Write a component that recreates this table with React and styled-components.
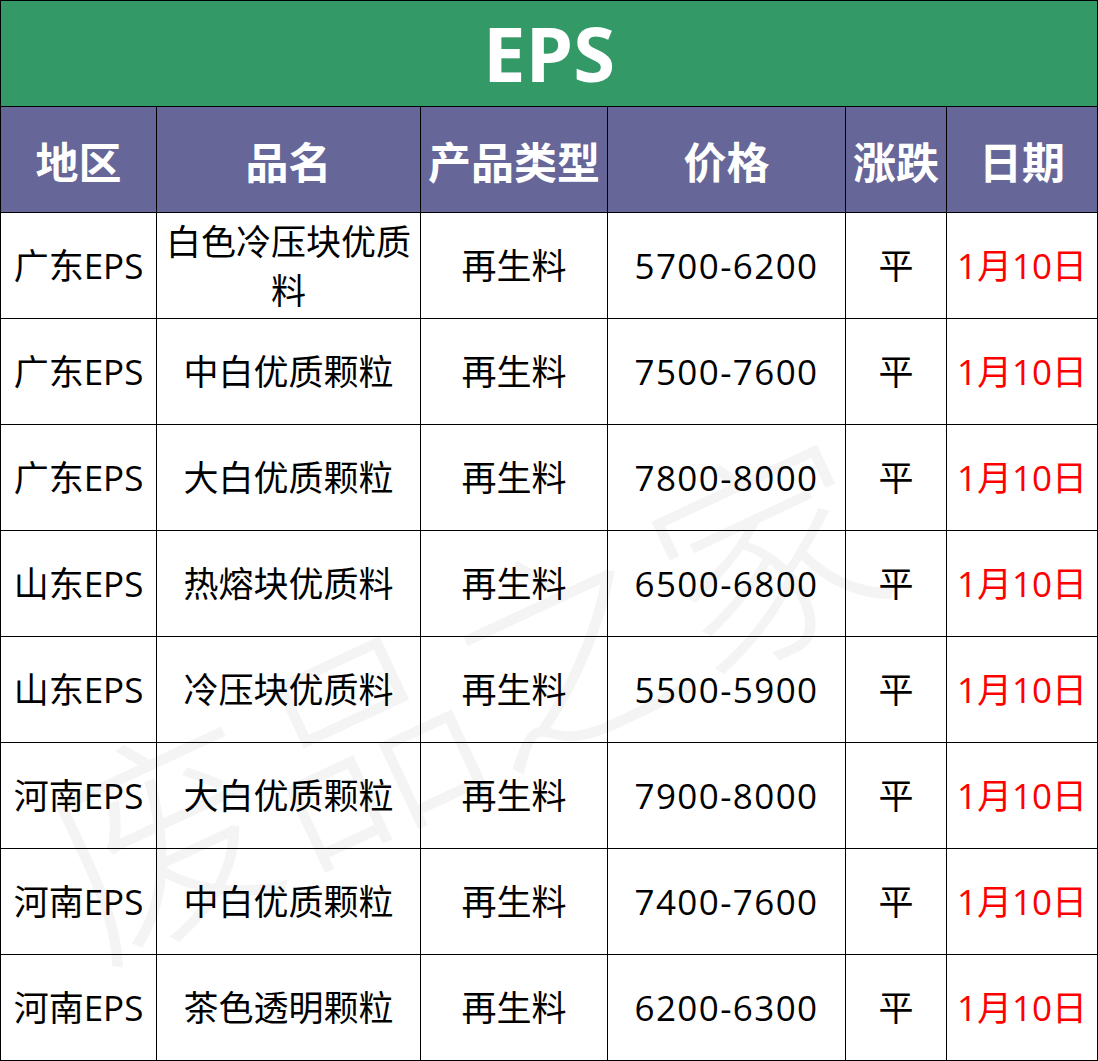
import React from "react";
import styled, { createGlobalStyle } from "styled-components";

const Global = createGlobalStyle`
  html, body { margin: 0; padding: 0; background: #ffffff; }
  body { font-family: "Open Sans", "Noto Sans CJK SC", sans-serif; }
`;

const Wrap = styled.div`
  position: relative;
  width: 1098px;
`;

const Grid = styled.div`
  display: grid;
  grid-template-columns: 155px 263px 186px 237px 100px 150px;
  grid-auto-rows: 105px;
  gap: 1px;
  padding: 1px;
  background: #000000;
  width: 1098px;
  box-sizing: border-box;
`;

const Title = styled.div`
  grid-column: 1 / -1;
  background: #339966;
  color: #ffffff;
  display: flex;
  align-items: center;
  justify-content: center;
  font-family: "Open Sans", "Noto Sans CJK SC", sans-serif;
  font-weight: 700;
  font-size: 76px;
  padding-bottom: 2px;
`;

const Head = styled.div`
  background: #666699;
  color: #ffffff;
  display: flex;
  align-items: center;
  justify-content: center;
  font-family: "Noto Sans CJK SC", sans-serif;
  font-weight: 700;
  font-size: 43px;
  white-space: nowrap;
`;

const Cell = styled.div`
  background: #ffffff;
  color: ${(p) => (p.$red ? "#ff0000" : "#000000")};
  display: flex;
  align-items: center;
  justify-content: center;
  text-align: center;
  font-family: "Open Sans", "Noto Sans CJK SC", sans-serif;
  font-size: 35px;
  line-height: 49px;
  letter-spacing: ${(p) => (p.$price ? "1.4px" : "0")};
  padding: 0 4px;
`;

const Watermark = styled.div`
  position: absolute;
  left: 10px;
  top: 560px;
  width: 900px;
  height: 250px;
  display: flex;
  align-items: center;
  justify-content: center;
  font-family: "Noto Sans CJK SC", sans-serif;
  font-weight: 300;
  font-size: 222px;
  line-height: 250px;
  color: rgba(0, 0, 0, 0.045);
  transform: rotate(-25deg);
  pointer-events: none;
  white-space: nowrap;
`;

const heads = ["地区", "品名", "产品类型", "价格", "涨跌", "日期"];

const rows = [
  ["广东EPS", "白色冷压块优质料", "再生料", "5700-6200"],
  ["广东EPS", "中白优质颗粒", "再生料", "7500-7600"],
  ["广东EPS", "大白优质颗粒", "再生料", "7800-8000"],
  ["山东EPS", "热熔块优质料", "再生料", "6500-6800"],
  ["山东EPS", "冷压块优质料", "再生料", "5500-5900"],
  ["河南EPS", "大白优质颗粒", "再生料", "7900-8000"],
  ["河南EPS", "中白优质颗粒", "再生料", "7400-7600"],
  ["河南EPS", "茶色透明颗粒", "再生料", "6200-6300"],
];

export default function App() {
  return (
    <>
      <Global />
      <Wrap>
        <Grid>
          <Title>EPS</Title>
          {heads.map((h) => (
            <Head key={h}>{h}</Head>
          ))}
          {rows.map((r, i) => (
            <React.Fragment key={i}>
              <Cell>{r[0]}</Cell>
              <Cell>{r[1]}</Cell>
              <Cell>{r[2]}</Cell>
              <Cell $price>{r[3]}</Cell>
              <Cell>平</Cell>
              <Cell $red>1月10日</Cell>
            </React.Fragment>
          ))}
        </Grid>
        <Watermark>废品之家</Watermark>
      </Wrap>
    </>
  );
}
